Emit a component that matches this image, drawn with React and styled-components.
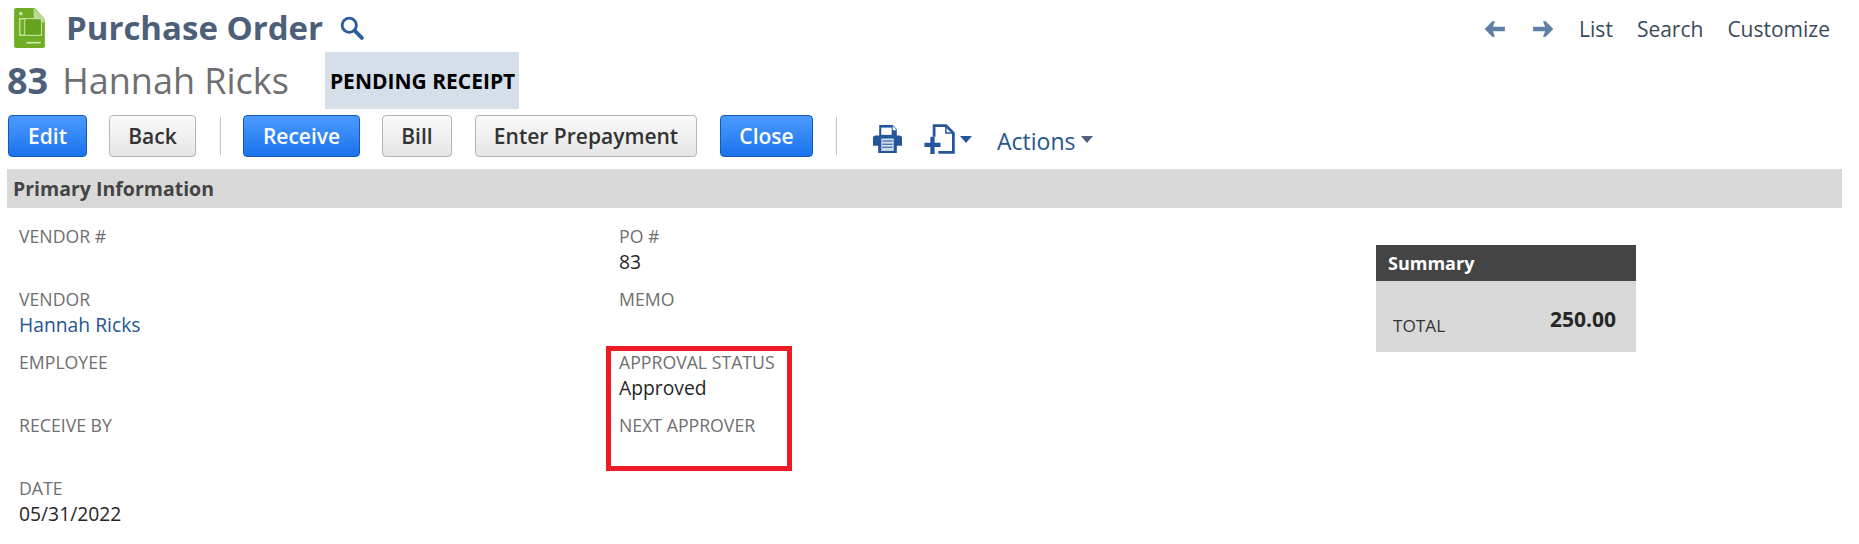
import React from 'react';
import styled, { createGlobalStyle } from 'styled-components';

const Global = createGlobalStyle`
  html, body { margin: 0; padding: 0; background: #fff; }
  body { font-family: 'Open Sans', 'Noto Sans', sans-serif; color: #262626; }
`;

const Page = styled.div`
  position: relative;
  width: 1859px;
  height: 544px;
  overflow: hidden;
`;

const TopBar = styled.div`
  display: flex;
  align-items: center;
  justify-content: space-between;
  height: 52px;
  padding: 3px 29px 0 14px;
  box-sizing: border-box;
`;

const TitleGroup = styled.div`
  display: flex;
  align-items: center;
`;

const PageTitle = styled.h1`
  margin: 0 17px 0 21px;
  font-size: 33px;
  line-height: 40px;
  font-weight: 700;
  color: #4d5f79;
`;

const TopNav = styled.nav`
  display: flex;
  align-items: center;
  padding-top: 2px;
`;

const ArrowButton = styled.span`
  display: flex;
  margin-right: ${p => p.$gap}px;
`;

const NavLink = styled.a`
  margin-left: ${p => p.$gap || 0}px;
  font-size: 21px;
  line-height: 24px;
  color: #3a4a5c;
`;

const RecordRow = styled.div`
  display: flex;
  align-items: center;
  height: 57px;
  padding-left: 7px;
`;

const RecordNumber = styled.span`
  font-size: 36px;
  font-weight: 700;
  color: #4d5f79;
`;

const RecordName = styled.span`
  margin-left: 14px;
  font-size: 36px;
  font-weight: 400;
  color: #6f6f6f;
`;

const StatusBadge = styled.div`
  display: flex;
  align-items: center;
  height: 57px;
  margin-left: 36px;
  padding: 0 4px 0 5px;
  background: #d5dfe9;
  color: #000;
  font-size: 21px;
  font-weight: 700;
`;

const Toolbar = styled.div`
  display: flex;
  align-items: center;
  height: 42px;
  margin-top: 6px;
  padding-left: 8px;
`;

const Button = styled.button`
  height: 42px;
  width: ${p => p.$width}px;
  margin-right: ${p => p.$gap ?? 22}px;
  padding: 0;
  box-sizing: border-box;
  border-radius: 4px;
  font-family: inherit;
  font-size: 21px;
  font-weight: 600;
  border: 1px solid ${p => (p.$primary ? '#125ab2' : '#b5b5b5')};
  color: ${p => (p.$primary ? '#fff' : '#333')};
  background: ${p =>
    p.$primary
      ? 'linear-gradient(to bottom, #4b9bff, #1a72ec)'
      : 'linear-gradient(to bottom, #fafafa, #e5e5e5)'};
`;

const Separator = styled.span`
  width: 1px;
  height: 38px;
  margin-right: ${p => p.$gap}px;
  background: #c4c4c4;
`;

const IconSlot = styled.span`
  display: flex;
  align-items: center;
  margin: 6px ${p => p.$gap}px 0 0;
`;

const ActionsMenu = styled.span`
  display: flex;
  align-items: center;
  margin: 9px 0 0 25px;
  font-size: 23px;
  line-height: 30px;
  color: #24568f;
`;

const Caret = styled.span`
  width: 0;
  height: 0;
  margin: 6px 0 0 ${p => p.$gap}px;
  border-left: 6px solid transparent;
  border-right: 6px solid transparent;
  border-top: 7px solid ${p => p.$color};
`;

const SectionBar = styled.div`
  display: flex;
  align-items: center;
  height: 39px;
  margin: 12px 17px 0 7px;
  padding-left: 6px;
  background: #d9d9d9;
  color: #444;
  font-size: 19.5px;
  font-weight: 700;
`;

const FormArea = styled.div`
  display: grid;
  grid-template-columns: 600px 757px 260px;
  padding: 16px 0 0 19px;
`;

const Column = styled.div`
  display: flex;
  flex-direction: column;
`;

const Field = styled.div`
  height: 63px;
`;

const FieldLabel = styled.div`
  font-size: 17.7px;
  line-height: 24px;
  color: #6f6f6f;
`;

const FieldValue = styled.div`
  margin-top: 1px;
  font-size: 19.3px;
  line-height: 25px;
  color: ${p => (p.$link ? '#24568f' : '#262626')};
`;

const SummaryBox = styled.aside`
  margin-top: 21px;
  height: 107px;
  background: #d9d9d9;
`;

const SummaryHeader = styled.div`
  height: 36px;
  padding-left: 12px;
  background: #444;
  color: #fff;
  font-size: 18px;
  font-weight: 700;
  line-height: 36px;
`;

const SummaryRow = styled.div`
  display: flex;
  justify-content: space-between;
  padding: 26px 20px 0 17px;
`;

const SummaryLabel = styled.span`
  margin-top: 7px;
  font-size: 17.2px;
  line-height: 24px;
  color: #333;
`;

const SummaryAmount = styled.span`
  font-size: 21px;
  font-weight: 700;
  line-height: 24px;
  color: #262626;
`;

const Highlight = styled.div`
  position: absolute;
  left: 606px;
  top: 346px;
  width: 186px;
  height: 125px;
  box-sizing: border-box;
  border: 5px solid #ed1c24;
`;

const LogoIcon = () => (
  <svg width="31" height="40" viewBox="0 0 30 39">
    <path d="M2 0h18l10 11v26a2 2 0 0 1-2 2H2a2 2 0 0 1-2-2V2a2 2 0 0 1 2-2z" fill="#6fae24" />
    <path d="M19 0l11 11v3L19 14z" fill="#bcd98f" />
    <rect x="5" y="4" width="3" height="3" fill="#d5e8b8" />
    <path d="M5.5 10.5h21v16h-21zM10.5 10.5v16" fill="none" stroke="#c3dca0" strokeWidth="1.4" />
    <rect x="11" y="11" width="15" height="15" fill="#64a31d" />
    <rect x="12" y="33" width="14" height="1.6" fill="#d5e8b8" />
  </svg>
);

const SearchIcon = () => (
  <svg width="24" height="24" viewBox="0 0 22 22">
    <circle cx="8.5" cy="8.5" r="6.5" fill="none" stroke="#2f5d9c" strokeWidth="2.6" />
    <path d="M13.5 13.5l6.5 6.5" stroke="#2f5d9c" strokeWidth="3.6" strokeLinecap="round" />
  </svg>
);

const ArrowIcon = ({ flip }) => (
  <svg width="23" height="18" viewBox="0 0 21 16" style={flip ? { transform: 'scaleX(-1)' } : undefined}>
    <path d="M8.5 1L1.5 8l7 7h2.5l-2-5H20V6H9l2-5z" fill="#5f7fa5" />
  </svg>
);

const PrintIcon = () => (
  <svg width="29" height="28" viewBox="0 0 28 27">
    <path d="M6 0h13l4 4v6h2.5A2.5 2.5 0 0 1 28 12.5V20h-5v7H5v-7H0v-7.5A2.5 2.5 0 0 1 2.5 10H6z" fill="#24569b" />
    <rect x="8" y="2.5" width="10" height="7" fill="#fff" />
    <path d="M19 1v4h4z" fill="#fff" />
    <rect x="8" y="13" width="12" height="12" fill="#cfdcec" />
    <path d="M9 15.5h10M9 18.5h10M9 21.5h10" stroke="#24569b" strokeWidth="1" />
  </svg>
);

const NewDocIcon = () => (
  <svg width="32" height="30" viewBox="0 0 29 28">
    <path d="M9 12V1.5h11l7 7V26.5H13" fill="none" stroke="#24569b" strokeWidth="2.6" />
    <path d="M20 1.5V8.5h7" fill="none" stroke="#24569b" strokeWidth="1.4" />
    <path d="M0 19.5h15M7.5 12v16" stroke="#24569b" strokeWidth="4" />
  </svg>
);

const leftFields = [
  { label: 'VENDOR #' },
  { label: 'VENDOR', value: 'Hannah Ricks', link: true },
  { label: 'EMPLOYEE' },
  { label: 'RECEIVE BY' },
  { label: 'DATE', value: '05/31/2022' },
];

const middleFields = [
  { label: 'PO #', value: '83' },
  { label: 'MEMO' },
  { label: 'APPROVAL STATUS', value: 'Approved' },
  { label: 'NEXT APPROVER' },
];

const renderField = f => (
  <Field key={f.label}>
    <FieldLabel>{f.label}</FieldLabel>
    {f.value && <FieldValue $link={f.link}>{f.value}</FieldValue>}
  </Field>
);

export default function App() {
  return (
    <Page>
      <Global />
      <TopBar>
        <TitleGroup>
          <LogoIcon />
          <PageTitle>Purchase Order</PageTitle>
          <SearchIcon />
        </TitleGroup>
        <TopNav>
          <ArrowButton $gap={26}><ArrowIcon /></ArrowButton>
          <ArrowButton $gap={24}><ArrowIcon flip /></ArrowButton>
          <NavLink>List</NavLink>
          <NavLink $gap={24}>Search</NavLink>
          <NavLink $gap={24}>Customize</NavLink>
        </TopNav>
      </TopBar>
      <RecordRow>
        <RecordNumber>83</RecordNumber>
        <RecordName>Hannah Ricks</RecordName>
        <StatusBadge>PENDING RECEIPT</StatusBadge>
      </RecordRow>
      <Toolbar>
        <Button $primary $width={79}>Edit</Button>
        <Button $width={87} $gap={24}>Back</Button>
        <Separator $gap={22} />
        <Button $primary $width={117} $gap={22}>Receive</Button>
        <Button $width={70} $gap={23}>Bill</Button>
        <Button $width={222} $gap={23}>Enter Prepayment</Button>
        <Button $primary $width={93} $gap={23}>Close</Button>
        <Separator $gap={36} />
        <IconSlot $gap={22}><PrintIcon /></IconSlot>
        <IconSlot $gap={0}><NewDocIcon /></IconSlot>
        <Caret $gap={4} $color="#24569b" />
        <ActionsMenu>Actions</ActionsMenu>
        <Caret $gap={6} $color="#4d5f79" />
      </Toolbar>
      <SectionBar>Primary Information</SectionBar>
      <FormArea>
        <Column>{leftFields.map(renderField)}</Column>
        <Column>{middleFields.map(renderField)}</Column>
        <SummaryBox>
          <SummaryHeader>Summary</SummaryHeader>
          <SummaryRow>
            <SummaryLabel>TOTAL</SummaryLabel>
            <SummaryAmount>250.00</SummaryAmount>
          </SummaryRow>
        </SummaryBox>
      </FormArea>
      <Highlight />
    </Page>
  );
}
